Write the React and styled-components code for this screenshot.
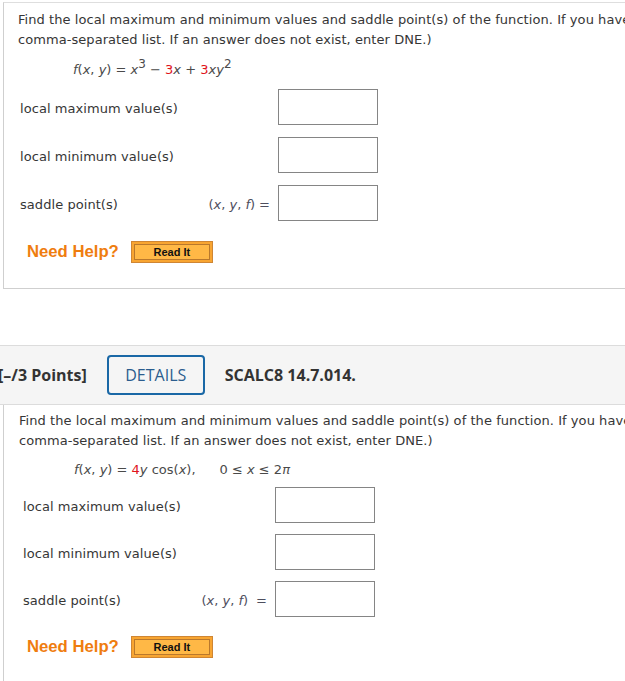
import React from "react";
import styled, { createGlobalStyle } from "styled-components";

const Global = createGlobalStyle`
  html, body { margin: 0; padding: 0; overflow: hidden; background: #fff; }
`;

const Page = styled.div`
  width: 1500px;
  padding-top: 2px;
  font-family: "DejaVu Sans", Verdana, sans-serif;
  font-size: 13px;
  color: #363636;
`;

const QuestionBox = styled.div`
  margin-left: 3px;
  border: 1px solid #cfcfcf;
  border-right: none;
  ${(p) => (p.$noTop ? "border-top: none;" : "border-top-color: #dedede;")}
  padding: ${(p) => p.$pt}px 0 ${(p) => p.$pb}px ${(p) => p.$pl}px;
`;

const Prompt = styled.div`
  line-height: 20px;
  white-space: nowrap;
  letter-spacing: 0.06px;
`;

const Formula = styled.div`
  margin-top: ${(p) => p.$mt}px;
  padding-left: 55px;
  line-height: 20px;
  white-space: nowrap;
  color: #4a4a4a;
`;

const I = styled.i`
  font-style: italic;
`;

const Red = styled.span`
  color: #e0141c;
`;

const Sup = styled.span`
  position: relative;
  top: -0.5em;
  font-size: 12px;
`;

const Spacer = styled.span`
  display: inline-block;
  width: ${(p) => p.$w}px;
`;

const Rows = styled.div`
  display: flex;
  flex-direction: column;
  gap: ${(p) => p.$gap}px;
  margin-top: ${(p) => p.$mt}px;
  margin-left: ${(p) => p.$indent}px;
  width: ${(p) => p.$w}px;
`;

const Row = styled.div`
  display: grid;
  grid-template-columns: 1fr auto 100px;
  column-gap: 8px;
  align-items: center;
`;

const Label = styled.span`
  line-height: 20px;
  padding-top: 3px;
  letter-spacing: 0.06px;
`;

const Expr = styled.span`
  color: #4e4e5e;
  line-height: 20px;
  padding-top: 3px;
  white-space: nowrap;
`;

const AnswerInput = styled.div`
  box-sizing: border-box;
  height: 36px;
  border: 1px solid #858585;
  background: #fff;
`;

const HelpRow = styled.div`
  display: flex;
  align-items: center;
  gap: 12px;
  margin-top: ${(p) => p.$mt}px;
  margin-left: ${(p) => p.$indent}px;
`;

const NeedHelp = styled.span`
  font-family: "Liberation Sans", Arial, sans-serif;
  font-weight: bold;
  font-size: 16.7px;
  color: #ef7d0f;
  line-height: 22px;
`;

const ReadIt = styled.button`
  box-sizing: border-box;
  width: 82px;
  height: 22px;
  padding: 0;
  border: 1px solid #cf8634;
  background: #ffb846;
  box-shadow: inset 0 0 0 2px #f8a531, inset 0 0 0 3px #b9782c;
  font-family: "Liberation Sans", Arial, sans-serif;
  font-weight: bold;
  font-size: 11px;
  color: #111;
  cursor: pointer;
`;

const Header = styled.div`
  margin-top: 56px;
  display: flex;
  align-items: center;
  gap: 20px;
  height: 58px;
  background: #f5f5f5;
  border-top: 1px solid #dcdcdc;
  border-bottom: 1px solid #dcdcdc;
  font-family: "Open Sans", sans-serif;
  font-size: 16px;
  color: #333;
`;

const Points = styled.span`
  font-weight: bold;
  margin-left: -2px;
`;

const DetailsButton = styled.button`
  box-sizing: border-box;
  height: 40px;
  width: 98px;
  padding: 0;
  border: 2px solid #1a68a6;
  border-radius: 4px;
  background: transparent;
  font-family: "Open Sans", sans-serif;
  font-size: 16px;
  font-weight: 500;
  color: #2b5d8e;
  cursor: pointer;
`;

const Code = styled.span`
  font-weight: bold;
  color: #333;
`;

const promptLine1 =
  "Find the local maximum and minimum values and saddle point(s) of the function. If you have three-dimensional graphing software, graph the function with a domain and viewpoint that reveal all the important aspects of the function. (Enter your answers as a";
const promptLine2 =
  "comma-separated list. If an answer does not exist, enter DNE.)";

function Answers({ gap, mt, indent, w, exprSpace }) {
  return (
    <Rows $gap={gap} $mt={mt} $indent={indent} $w={w}>
      <Row>
        <Label>local maximum value(s)</Label>
        <Expr />
        <AnswerInput />
      </Row>
      <Row>
        <Label>local minimum value(s)</Label>
        <Expr />
        <AnswerInput />
      </Row>
      <Row>
        <Label>saddle point(s)</Label>
        <Expr>
          (<I>x</I>, <I>y</I>, <I>f</I>)<Spacer $w={exprSpace} />=
        </Expr>
        <AnswerInput />
      </Row>
    </Rows>
  );
}

export default function App() {
  return (
    <Page>
      <Global />
      <QuestionBox $pt={7} $pb={25} $pl={14}>
        <Prompt>
          {promptLine1}
          <br />
          {promptLine2}
        </Prompt>
        <Formula $mt={10}>
          <I>f</I>(<I>x</I>, <I>y</I>) = <I>x</I>
          <Sup>3</Sup> − <Red>3</Red>
          <I>x</I> + <Red>3</Red>
          <I>xy</I>
          <Sup>2</Sup>
        </Formula>
        <Answers gap={12} mt={9} indent={2} w={358} exprSpace={4} />
        <HelpRow $mt={20} $indent={9}>
          <NeedHelp>Need Help?</NeedHelp>
          <ReadIt>Read It</ReadIt>
        </HelpRow>
      </QuestionBox>

      <Header>
        <Points>[–/3 Points]</Points>
        <DetailsButton>DETAILS</DetailsButton>
        <Code>SCALC8 14.7.014.</Code>
      </Header>

      <QuestionBox $noTop $pt={6} $pb={30} $pl={15}>
        <Prompt>
          {promptLine1}
          <br />
          {promptLine2}
        </Prompt>
        <Formula $mt={9}>
          <I>f</I>(<I>x</I>, <I>y</I>) = <Red>4</Red>
          <I>y</I> cos(<I>x</I>),<Spacer $w={24} />0 ≤ <I>x</I> ≤ 2<I>π</I>
        </Formula>
        <Answers gap={11} mt={7} indent={4} w={352} exprSpace={8} />
        <HelpRow $mt={19} $indent={8}>
          <NeedHelp>Need Help?</NeedHelp>
          <ReadIt>Read It</ReadIt>
        </HelpRow>
      </QuestionBox>
    </Page>
  );
}
